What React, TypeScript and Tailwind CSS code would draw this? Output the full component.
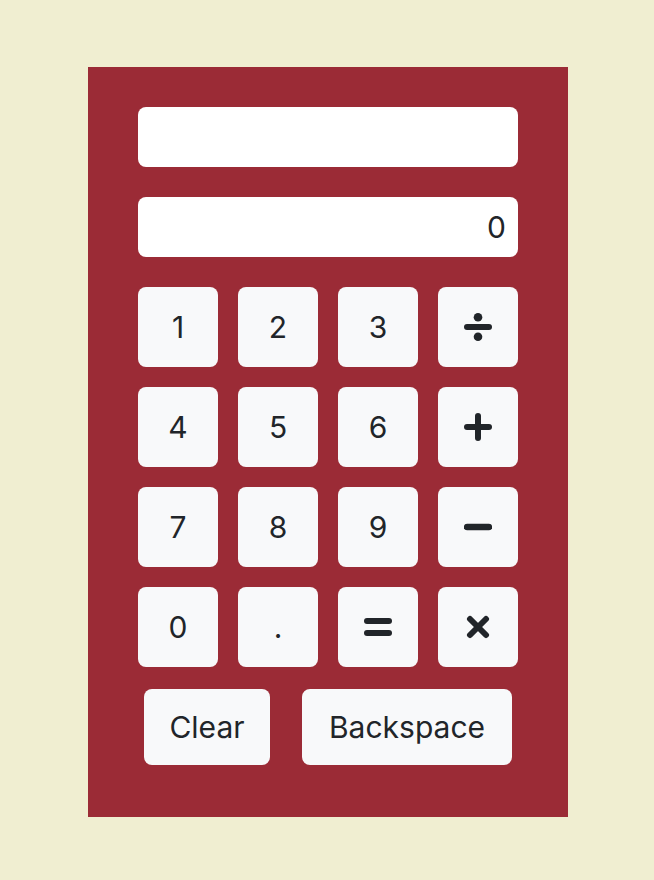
import type { ReactNode } from "react";

const INK = "#212529";

const Divide = () => (
  <svg width="28" height="28" viewBox="0 0 28 28">
    <line x1="3" y1="14" x2="25" y2="14" stroke={INK} strokeWidth="6" strokeLinecap="round" />
    <circle cx="14" cy="4.3" r="4.3" fill={INK} />
    <circle cx="14" cy="23.7" r="4.3" fill={INK} />
  </svg>
);

const Plus = () => (
  <svg width="28" height="28" viewBox="0 0 28 28">
    <line x1="3" y1="14" x2="25" y2="14" stroke={INK} strokeWidth="6" strokeLinecap="round" />
    <line x1="14" y1="3" x2="14" y2="25" stroke={INK} strokeWidth="6" strokeLinecap="round" />
  </svg>
);

const Minus = () => (
  <svg width="28" height="8" viewBox="0 0 28 8">
    <line x1="3" y1="4" x2="25" y2="4" stroke={INK} strokeWidth="6.4" strokeLinecap="round" />
  </svg>
);

const Equals = () => (
  <svg width="28" height="20" viewBox="0 0 28 20">
    <line x1="3" y1="4" x2="25" y2="4" stroke={INK} strokeWidth="6" strokeLinecap="round" />
    <line x1="3" y1="16" x2="25" y2="16" stroke={INK} strokeWidth="6" strokeLinecap="round" />
  </svg>
);

const Times = () => (
  <svg width="24" height="24" viewBox="0 0 24 24">
    <line x1="4" y1="4" x2="20" y2="20" stroke={INK} strokeWidth="6" strokeLinecap="round" />
    <line x1="20" y1="4" x2="4" y2="20" stroke={INK} strokeWidth="6" strokeLinecap="round" />
  </svg>
);

const keys: ReactNode[] = [
  "1", "2", "3", <Divide key="d" />,
  "4", "5", "6", <Plus key="p" />,
  "7", "8", "9", <Minus key="m" />,
  "0", ".", <Equals key="e" />, <Times key="t" />,
];

const Key = ({ children }: { children: ReactNode }) => (
  <button className="w-[80px] h-[80px] rounded-lg bg-[#f8f9fa] text-[#212529] text-[30px] flex items-center justify-center">
    {children}
  </button>
);

export default function App() {
  return (
    <div
      className="min-h-[880px] w-full bg-[#f0eed1] pt-[67px]"
      style={{ fontFamily: "Inter, 'Noto Sans', sans-serif" }}
    >
      <div className="ml-[88px] w-[480px] h-[750px] bg-[#9b2b36] px-[50px] pt-[40px] flex flex-col">
        <div className="h-[60px] w-full rounded-lg bg-white" />
        <div className="h-[60px] w-full rounded-lg bg-white mt-[30px] flex items-center justify-end pr-[12px] text-[30px] text-[#212529]">
          0
        </div>
        <div className="grid grid-cols-4 gap-[20px] mt-[30px]">
          {keys.map((k, i) => (
            <Key key={i}>{k}</Key>
          ))}
        </div>
        <div className="flex justify-center gap-[32px] mt-[22px]">
          <button className="w-[126px] h-[76px] rounded-lg bg-[#f8f9fa] text-[#212529] text-[30px]">
            Clear
          </button>
          <button className="w-[210px] h-[76px] rounded-lg bg-[#f8f9fa] text-[#212529] text-[30px]">
            Backspace
          </button>
        </div>
      </div>
    </div>
  );
}
